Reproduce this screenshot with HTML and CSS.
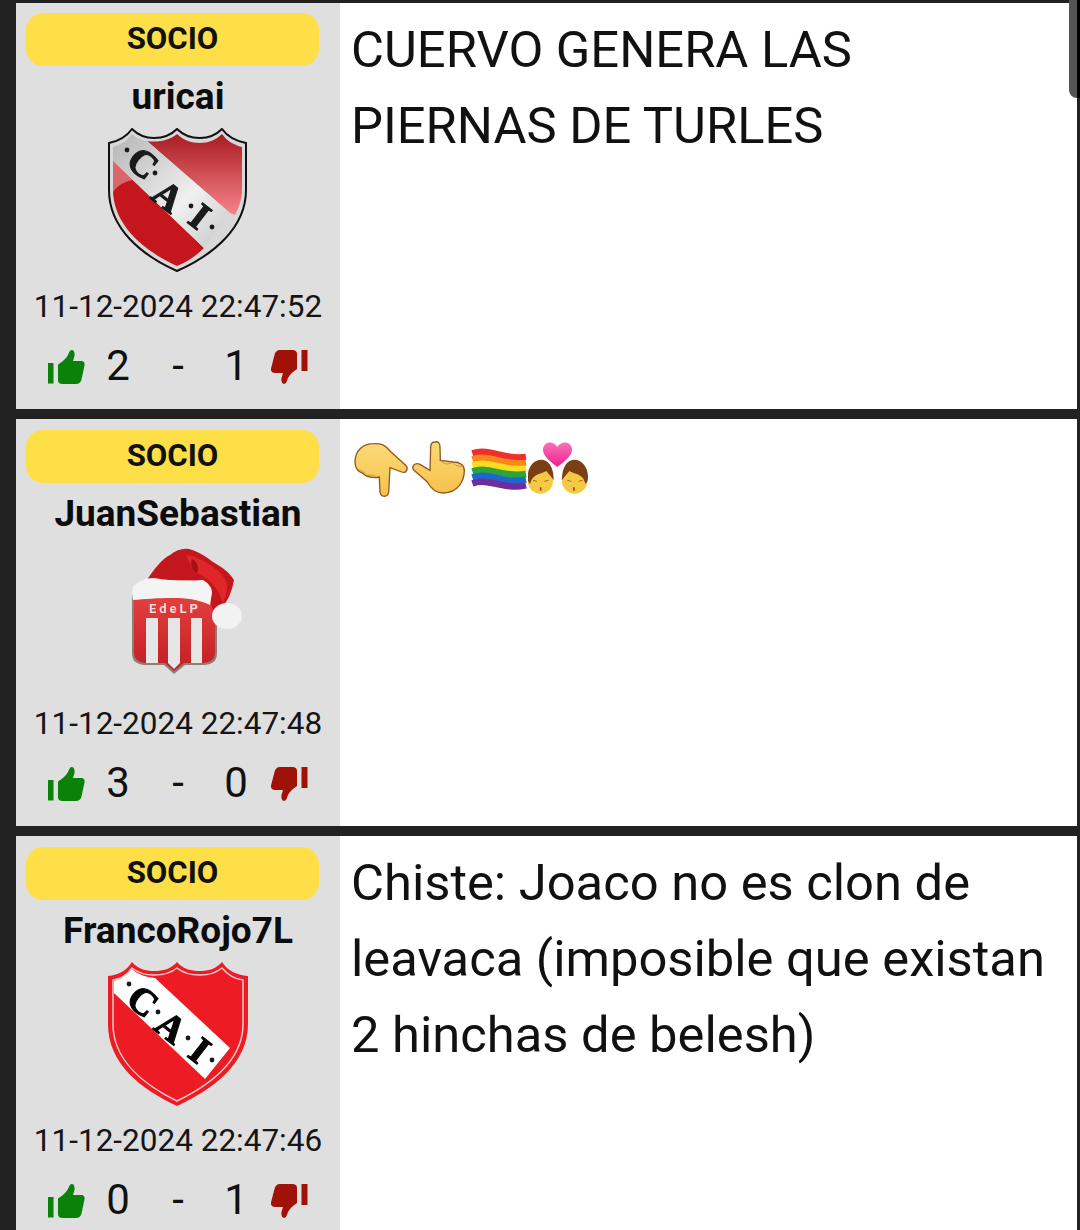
FILE: index.html
```html
<!DOCTYPE html>
<html lang="es">
<head>
<meta charset="utf-8">
<title>Comentarios</title>
<link rel="stylesheet" href="styles.css">
</head>
<body>
<svg class="defs" width="0" height="0" aria-hidden="true">
  <defs>
    <symbol id="up" viewBox="0 0 37 34">
      <path fill="#0a820a" d="M0 13h5.500v20.500H0zM10 14.500C14 12 18 9 20 5 21 2 22 0 24 0c2 0 3 3 2.500 6L25 11h8c3 0 4 2 3.500 4.500l-3 14C33 32 31 34 28 34H15c-3 0-5-1-5-4z"/>
    </symbol>
    <symbol id="down" viewBox="0 0 37 34">
      <path fill="#a01208" d="M30.500 0H36.500v21h-6zM26 19c-3 2-7 5-9 9-1 3-2 6-4 6-2 0-3-3-2.500-6l1.500-5H4c-3 0-4.500-2-4-4.500L3.500 5C4 2 6 0 9 0h12c3 0 5 1 5 4z"/>
    </symbol>
    <linearGradient id="gloss" x1="0" y1="0" x2="0" y2="1">
      <stop offset="0" stop-color="#a81c22"/>
      <stop offset="1" stop-color="#f8848a"/>
    </linearGradient>
    <linearGradient id="band" x1="0" y1="0" x2="1" y2="1">
      <stop offset="0" stop-color="#b4b4b4"/>
      <stop offset=".6" stop-color="#f0f0f0"/>
      <stop offset="1" stop-color="#c6c6c6"/>
    </linearGradient>
    <linearGradient id="skin" x1="0" y1="0" x2="0" y2="1">
      <stop offset="0" stop-color="#fbd978"/>
      <stop offset="1" stop-color="#f6c24a"/>
    </linearGradient>
    <linearGradient id="stripe" x1="0" y1="0" x2="0" y2="1">
      <stop offset="0" stop-color="#e5403f"/>
      <stop offset="1" stop-color="#c11f25"/>
    </linearGradient>
    <linearGradient id="heart" x1="0" y1="0" x2="0" y2="1">
      <stop offset="0" stop-color="#f971b8"/>
      <stop offset="1" stop-color="#f0208e"/>
    </linearGradient>
  </defs>
</svg>

<main class="feed">
  <article class="post">
    <aside class="side">
      <div class="badge">SOCIO</div>
      <div class="name">uricai</div>
      <div class="avatar">
        <svg class="crest" viewBox="0 0 140 144" width="140" height="144">
          <path fill="#d8d8d8" stroke="#111" stroke-width="2" d="M1 15C11 13 19 8 24 1 30 7 38 10 46 10 55 10 63 7 69 1 75 7 83 10 92 10 100 10 108 7 114 1 119 8 128 13 138 15V62C138 100 105 127 69 143 33 127 1 100 1 62Z"/>
          <path fill="url(#gloss)" d="M39 13C50 15 62 12 69 6 75 12 83 15 92 15 100 15 108 12 114 6 119 13 126 17 134 19V62C134 71 131 79 127 87L122 85Z"/>
          <path fill="#c4161c" d="M5 33V62C5 97 36 123 69 138 79 134 88 128 96 120Z"/>
          <path fill="#d9666b" d="M5 33 26 52C17 53 10 57 5 64Z"/>
          <path fill="url(#band)" d="M5 19C13 17 20 12 24 6 28 10 33 12 39 13L122 85 96 120 5 33Z"/>
          <g class="crest-letters">
            <circle cx="19" cy="22" r="2.400"/>
            <text transform="translate(35 35) rotate(38)">C</text>
            <circle cx="47" cy="45" r="2.400"/>
            <text transform="translate(60 68) rotate(38)">A</text>
            <circle cx="83" cy="78" r="2.400"/>
            <text transform="translate(92 88) rotate(38)">I</text>
            <circle cx="104" cy="99" r="2.400"/>
          </g>
        </svg>
      </div>
      <time class="date">11-12-2024 22:47:52</time>
      <div class="votes">
        <svg class="thumb"><use href="#up"/></svg>
        <span class="count">2</span>
        <span class="dash">-</span>
        <span class="count">1</span>
        <svg class="thumb thumb-down"><use href="#down"/></svg>
      </div>
    </aside>
    <div class="body">CUERVO GENERA LAS PIERNAS DE TURLES</div>
  </article>

  <article class="post">
    <aside class="side">
      <div class="badge">SOCIO</div>
      <div class="name">JuanSebastian</div>
      <div class="avatar">
        <svg class="crest crest-soft" viewBox="0 0 140 144" width="140" height="144">
          <path fill="#8d7f74" d="M24 50H109V108C109 116 105 119 97 120H77L66 129 56 120H36C28 119 24 116 24 108Z"/>
          <path fill="url(#stripe)" d="M26 50H107V107C107 114 103 117 96 118H76L66 126 57 118H37C30 117 26 114 26 107Z"/>
          <g fill="#e6e6e6">
            <rect x="38" y="73" width="12" height="45"/>
            <path d="M60 73H72V118L66 124 60 118Z"/>
            <rect x="83" y="73" width="11" height="45"/>
          </g>
          <text class="edelp" x="67" y="68">EdeLP</text>
          <path fill="#c4171d" d="M39 35C46 24 54 14 62 10 68 5 75 3 81 4 92 7 100 13 105 17 114 22 122 28 126 35 124 46 120 56 114 62L105 66 96 36Z"/>
          <path fill="#df2629" d="M78 10C92 12 104 20 114 30 121 38 120 46 115 58 110 42 100 32 85 26Z"/>
          <path fill="#a70f15" d="M84 14C90 16 92 26 88 28 84 26 82 20 84 14Z"/>
          <path fill="#f4f4f4" d="M25 42C30 36 38 33 46 33 62 36 80 36 95 35 100 38 104 42 104 48L102 60C90 54 78 53 65 53 50 53 36 54 25 55 24 50 24 46 25 42Z"/>
          <ellipse fill="#f2f2f2" cx="119" cy="71" rx="15" ry="13"/>
        </svg>
      </div>
      <time class="date">11-12-2024 22:47:48</time>
      <div class="votes">
        <svg class="thumb"><use href="#up"/></svg>
        <span class="count">3</span>
        <span class="dash">-</span>
        <span class="count">0</span>
        <svg class="thumb thumb-down"><use href="#down"/></svg>
      </div>
    </aside>
    <div class="body">
      <div class="emoji-row">
        <svg class="emoji" viewBox="36 36 177 177">
          <path fill="url(#skin)" stroke="#8f5a1c" stroke-width="4" d="M45 105C45 70 70 50 100 50 125 48 135 55 150 72L197 115C207 125 198 140 185 135L150 122 146 195C144 212 122 212 120 195L118 150C100 155 80 150 70 140 55 135 45 125 45 105Z"/>
          <path fill="none" stroke="#c9974a" stroke-width="3" d="M55 128C65 130 70 135 75 138M80 145C90 142 100 146 108 148"/>
        </svg>
        <svg class="emoji" viewBox="213 36 177 177">
          <path fill="url(#skin)" stroke="#8f5a1c" stroke-width="4" d="M285 45C295 42 300 50 300 60L301 100 340 105C360 105 373 115 373 130 373 160 355 198 310 198 285 198 270 180 262 165L222 130C212 118 225 105 240 112L270 130 272 60C272 50 277 45 285 45Z"/>
          <path fill="none" stroke="#c9974a" stroke-width="3" d="M305 104C315 112 325 112 335 108M340 110C350 118 358 118 368 118"/>
        </svg>
        <svg class="emoji" viewBox="390 36 177 177">
          <g fill="none" stroke-width="19.500">
            <path stroke="#ee2f2c" d="M397 79C450 62 490 100 558 90"/>
            <path stroke="#f9881a" d="M397 97C450 80 490 118 558 107"/>
            <path stroke="#fbdc1e" d="M397 115C450 98 490 136 558 124"/>
            <path stroke="#2ba43a" d="M397 133C450 116 490 154 558 141"/>
            <path stroke="#1f66d0" d="M397 151C450 134 490 172 558 158"/>
            <path stroke="#6f2c9c" d="M397 169C450 152 490 190 558 175"/>
          </g>
        </svg>
        <svg class="emoji emoji-wide" viewBox="567 36 190 177">
          <path fill="url(#heart)" d="M655 120C630 100 612 86 612 68 612 52 626 44 638 47 646 49 652 54 655 60 658 54 664 49 672 47 685 44 699 52 699 68 699 86 680 100 655 120Z"/>
          <circle fill="#f6c945" cx="604" cy="162" r="38"/>
          <path fill="#7a3f14" d="M566 150C566 118 586 98 606 98 628 98 645 120 644 160 638 150 630 142 622 132 606 142 580 140 574 170 568 168 566 160 566 150Z"/>
          <path fill="none" stroke="#6b4a14" stroke-width="2" d="M582 160l12 3M616 163l12-3"/>
          <path fill="#7a4416" d="M602 180c6 0 8 4 4 6 4 2 2 6-4 6 2-2 2-4 0-6 2-2 2-4 0-6z"/>
          <circle fill="#f6c945" cx="707" cy="162" r="38"/>
          <path fill="#7a3f14" d="M747 150C747 118 727 98 707 98 685 98 668 120 669 160 675 150 683 142 691 132 707 142 733 140 739 170 745 168 747 160 747 150Z"/>
          <path fill="none" stroke="#6b4a14" stroke-width="2" d="M685 160l12 3M719 163l12-3"/>
          <path fill="#7a4416" d="M708 180c-6 0-8 4-4 6-4 2-2 6 4 6-2-2-2-4 0-6-2-2-2-4 0-6z"/>
        </svg>
      </div>
    </div>
  </article>

  <article class="post">
    <aside class="side">
      <div class="badge">SOCIO</div>
      <div class="name">FrancoRojo7L</div>
      <div class="avatar">
        <svg class="crest" viewBox="0 0 140 144" width="140" height="144">
          <path fill="#ed1c24" d="M0 14C11 13 19 8 24 0 30 7 38 9 46 9 55 9 63 7 69 0 75 7 83 9 92 9 100 9 108 7 114 0 119 8 128 13 140 14V62C140 102 105 127 69 144 33 127 0 102 0 62Z"/>
          <path fill="none" stroke="#f6c9cb" stroke-width="1.500" d="M5 18C14 17 20 12 24 6 30 11 38 13 46 13 55 13 63 11 69 6 75 11 83 13 92 13 100 13 108 11 114 6 119 12 126 17 135 18V62C135 98 102 123 69 139 36 123 5 98 5 62Z"/>
          <path fill="#fff" d="M6 31V19C14 17 20 12 24 7 29 12 37 15 47 16L122 86 97 117Z"/>
          <g class="crest-letters crest-letters-flat">
            <circle cx="21" cy="22" r="2.400"/>
            <text transform="translate(35 39) rotate(38)">C</text>
            <circle cx="50" cy="50" r="2.400"/>
            <text transform="translate(63 65) rotate(38)">A</text>
            <circle cx="80" cy="76" r="2.400"/>
            <text transform="translate(92 88) rotate(38)">I</text>
            <circle cx="104" cy="98" r="2.400"/>
          </g>
        </svg>
      </div>
      <time class="date">11-12-2024 22:47:46</time>
      <div class="votes">
        <svg class="thumb"><use href="#up"/></svg>
        <span class="count">0</span>
        <span class="dash">-</span>
        <span class="count">1</span>
        <svg class="thumb thumb-down"><use href="#down"/></svg>
      </div>
    </aside>
    <div class="body">Chiste: Joaco no es clon de leavaca (imposible que existan 2 hinchas de belesh)</div>
  </article>
</main>

<div class="scrollbar"></div>
</body>
</html>
```

FILE: styles.css
```css
* {
  box-sizing: border-box;
}

html,
body {
  margin: 0;
  height: 1230px;
  overflow: hidden;
  background: #222;
}

body {
  position: relative;
  font-family: Roboto, "Noto Sans", sans-serif;
  color: #111;
}

.defs {
  position: absolute;
}

.feed {
  display: flex;
  flex-direction: column;
  gap: 10px;
  padding: 2px 3px 0 16px;
}

.post {
  display: grid;
  grid-template-columns: 324px 1fr;
  height: 407px;
  flex: none;
}

.post:first-child {
  border-top: 1px solid #222;
}

.post:first-child .side {
  padding-top: 10px;
}

.side {
  display: flex;
  flex-direction: column;
  align-items: center;
  padding-top: 11px;
  background: #dfdfdf;
}

.badge {
  align-self: flex-start;
  width: 293px;
  height: 53px;
  margin-left: 10px;
  border-radius: 17px;
  background: #ffdf48;
  font-size: 31.200px;
  font-weight: 700;
  line-height: 52px;
  text-align: center;
  color: #111;
}

.name {
  height: 62px;
  font-size: 37px;
  font-weight: 700;
  line-height: 62px;
  color: #0c0c0c;
}

.avatar {
  width: 140px;
  height: 144px;
}

.crest {
  display: block;
  filter: blur(0.4px);
}

.crest-soft {
  filter: blur(0.7px);
}

.crest-letters text {
  font-family: "Liberation Serif", serif;
  font-size: 38px;
  font-weight: 700;
  fill: #1a1a1a;
  stroke: #1a1a1a;
  stroke-width: 1.200px;
  text-anchor: middle;
  dominant-baseline: central;
}

.crest-letters circle {
  fill: #1a1a1a;
}

.crest-letters-flat text {
  fill: #050505;
  stroke: #050505;
}

.edelp {
  font-family: Roboto, sans-serif;
  font-size: 13px;
  font-weight: 700;
  letter-spacing: 3px;
  text-anchor: middle;
  fill: #f1dede;
}

.date {
  height: 68px;
  font-size: 31.500px;
  line-height: 70px;
  color: #151515;
  white-space: nowrap;
}

.votes {
  display: grid;
  grid-template-columns: 37px 66px 54px 62px 5px 36px;
  width: 260px;
  height: 50px;
  align-items: center;
  font-size: 42px;
  line-height: 52px;
  text-align: center;
  color: #111;
}

.thumb {
  width: 37px;
  height: 34px;
  margin-top: 1px;
}

.thumb-down {
  grid-column: 6;
  margin-left: -1px;
}

.body {
  padding: 9px 12px 0 11px;
  background: #fff;
  font-size: 50.700px;
  line-height: 76px;
  color: #111;
}

.emoji-row {
  display: flex;
  margin-top: 11px;
  margin-left: 1px;
}

.emoji {
  display: block;
  flex: none;
  width: 59px;
  height: 59px;
}

.emoji-wide {
  width: 63.333px;
  margin-left: -1px;
}

.scrollbar {
  position: absolute;
  top: 0;
  right: 0;
  width: 11px;
  height: 98px;
  border-right: 3px solid #000;
  border-bottom-left-radius: 8px;
  background: #555;
}
```
